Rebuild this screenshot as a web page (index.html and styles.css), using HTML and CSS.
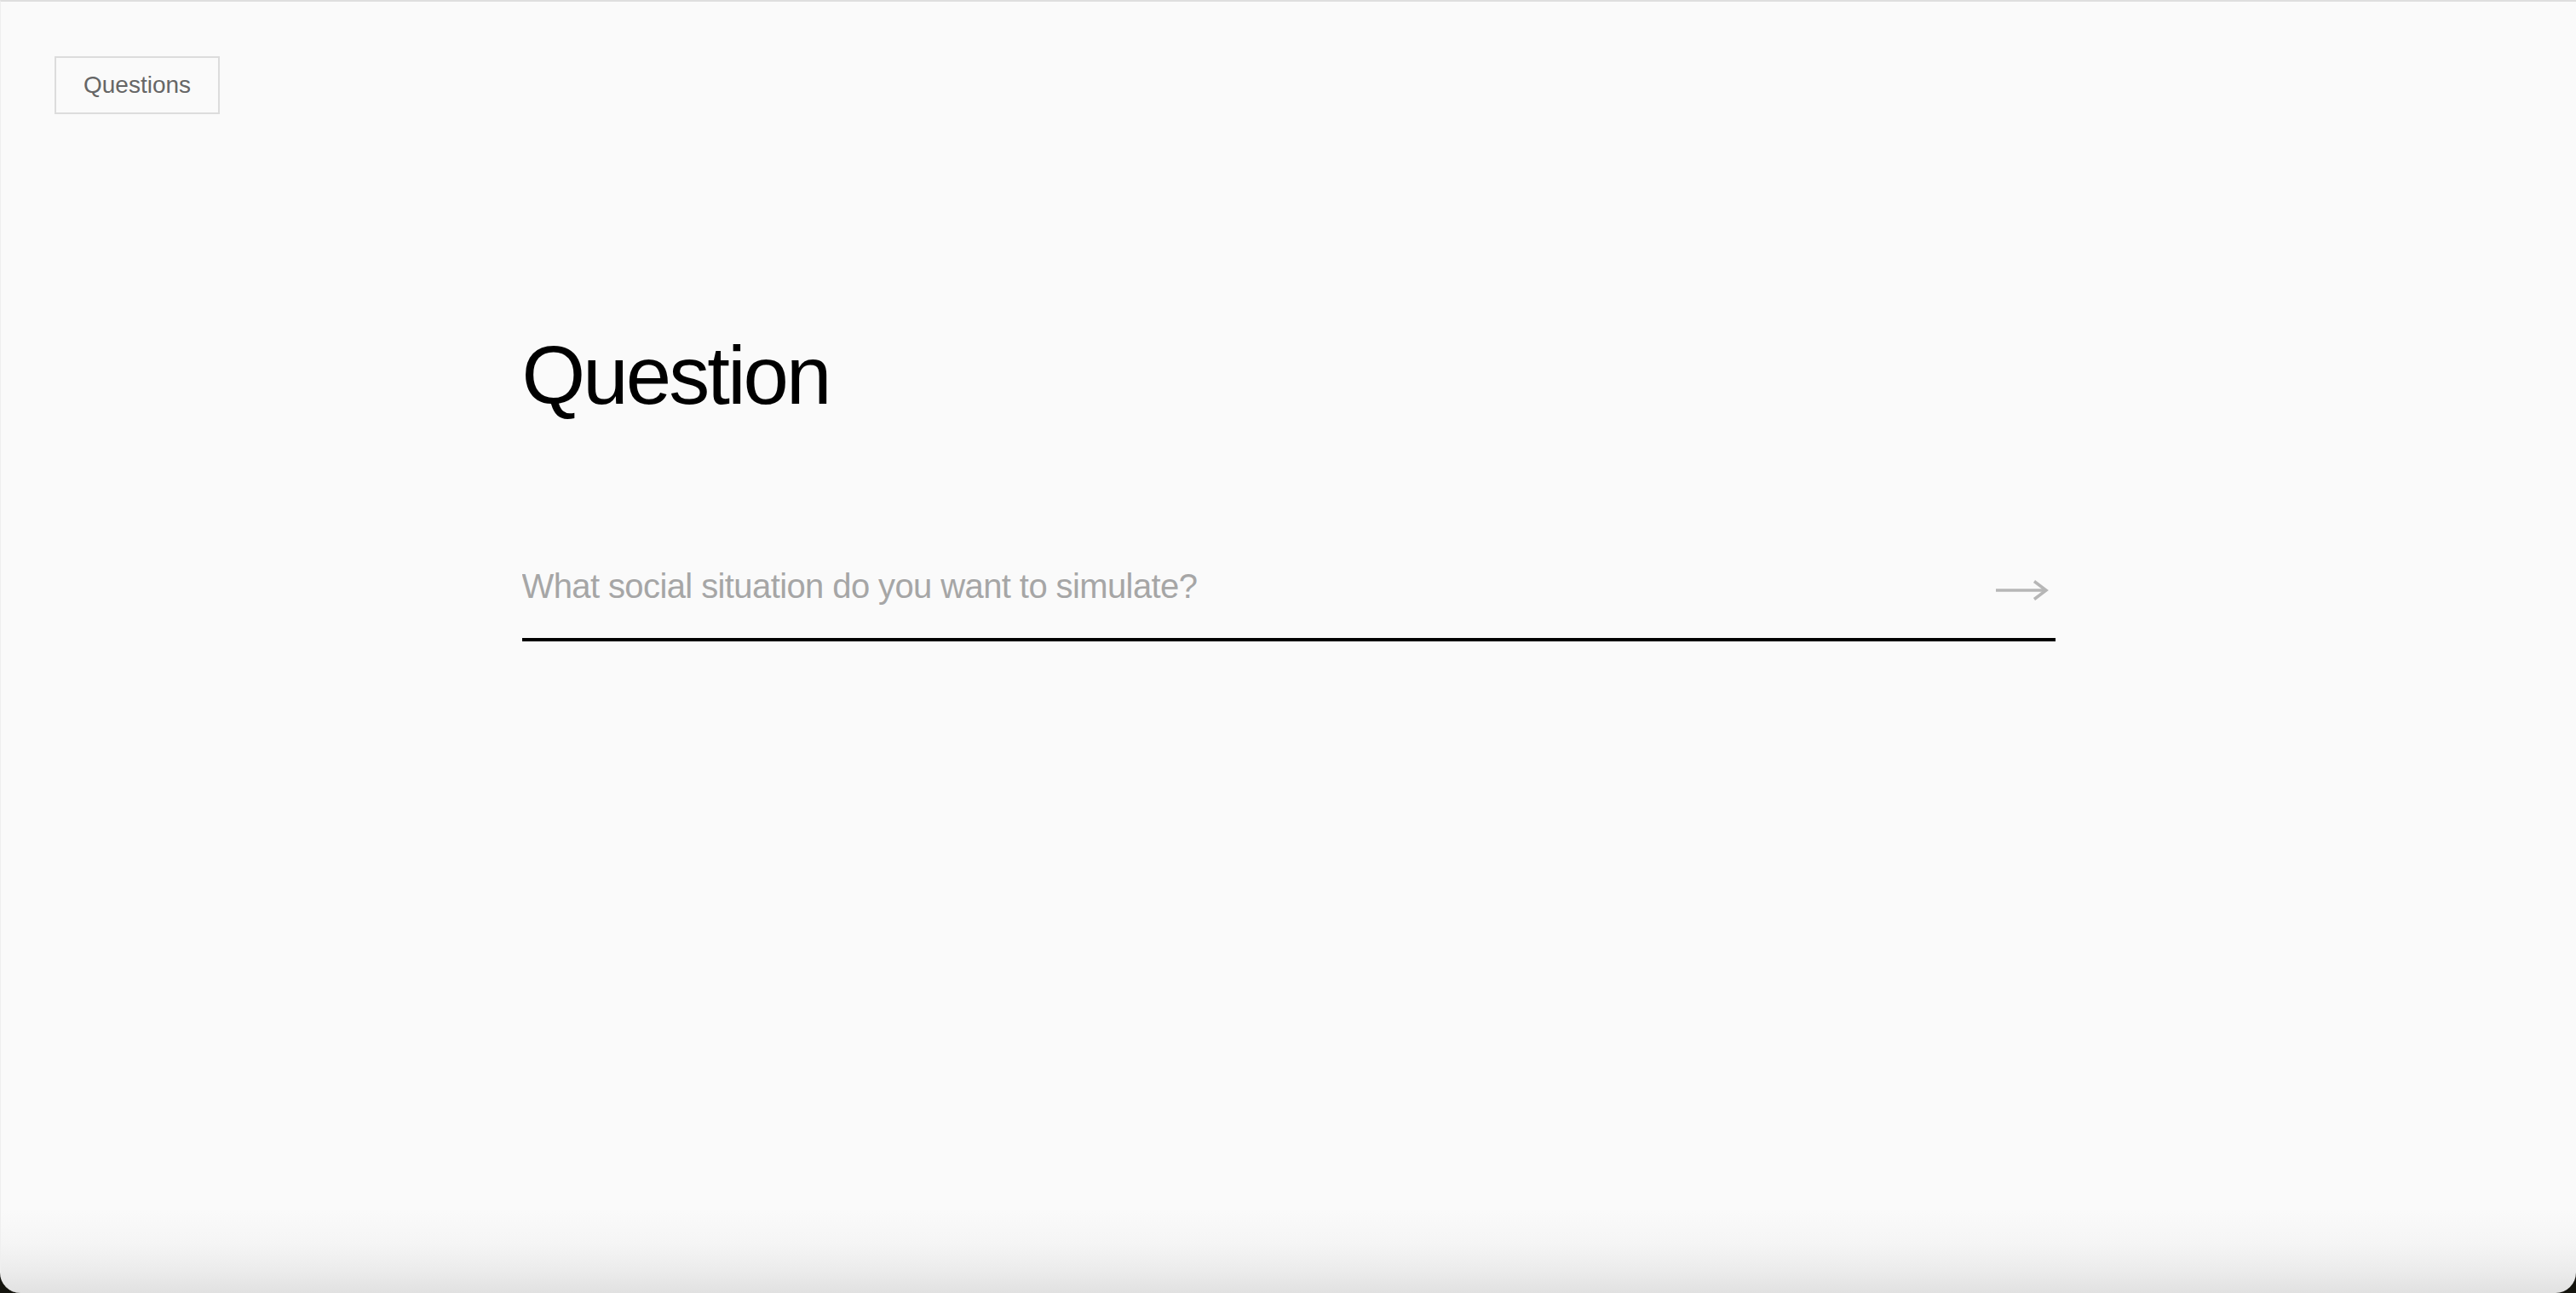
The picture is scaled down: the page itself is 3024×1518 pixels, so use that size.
FILE: index.html
```html
<!DOCTYPE html>
<html lang="en">
<head>
<meta charset="utf-8">
<title>Question</title>
<link rel="stylesheet" href="styles.css">
</head>
<body>
<div class="window">
  <header class="topbar">
    <button class="nav-btn" type="button">Questions</button>
  </header>
  <main class="main">
    <h1 class="title">Question</h1>
    <form class="ask-row">
      <input class="ask-input" type="text" placeholder="What social situation do you want to simulate?">
      <button class="ask-submit" type="button" aria-label="Submit">
        <svg class="arrow" width="64" height="24" viewBox="0 0 64 24" fill="none">
          <path d="M2 12 H60" stroke="#b6b6b6" stroke-width="3.5"/>
          <path d="M47 1.5 L61 12 L47 22.5" stroke="#b6b6b6" stroke-width="3.5" stroke-linejoin="miter"/>
        </svg>
      </button>
    </form>
  </main>
</div>
</body>
</html>
```

FILE: styles.css
```css
html, body {
  margin: 0;
  padding: 0;
}

body {
  background: #14140e;
  width: 3024px;
  height: 1518px;
  overflow: hidden;
  font-family: "Liberation Sans", Arial, Helvetica, sans-serif;
}

.window {
  box-sizing: border-box;
  height: 1518px;
  border-top: 2px solid #dedede;
  border-left: 1px solid #efefef;
  border-radius: 0 0 24px 24px;
  overflow: hidden;
  background: linear-gradient(to bottom, #fafafa 0, #fafafa 1420px, #f5f5f5 1458px, #ebebeb 1492px, #e1e1e1 1516px);
}

.topbar {
  padding: 64px 0 0 63px;
}

.nav-btn {
  box-sizing: border-box;
  height: 68px;
  padding: 12px 32px;
  border: 2px solid #dcdcdc;
  background: transparent;
  color: #666666;
  font-family: "Liberation Sans", Arial, sans-serif;
  font-size: 28px;
  line-height: 40px;
  cursor: pointer;
}

.main {
  width: 1800px;
  margin: 0 auto;
}

.title {
  margin: 259px 0 0;
  font-family: "Liberation Sans", Arial, sans-serif;
  font-weight: 400;
  font-size: 96px;
  line-height: 96px;
  letter-spacing: -2.9px;
  color: #000;
}

.ask-row {
  margin: 140px 0 0;
  display: flex;
  align-items: center;
  border-bottom: 4px solid #000;
}

.ask-input {
  flex: 1;
  min-width: 0;
  padding: 31px 0 33px;
  border: none;
  outline: none;
  background: transparent;
  font-family: "Liberation Sans", Arial, sans-serif;
  font-size: 40px;
  line-height: 56px;
  letter-spacing: -0.6px;
  color: #222;
}

.ask-input::placeholder {
  color: #a6a6a6;
  opacity: 1;
}

.ask-submit {
  display: flex;
  align-items: center;
  margin: 8px 8px 0 0;
  padding: 0;
  border: none;
  background: transparent;
  cursor: pointer;
}

.arrow {
  display: block;
}
```
